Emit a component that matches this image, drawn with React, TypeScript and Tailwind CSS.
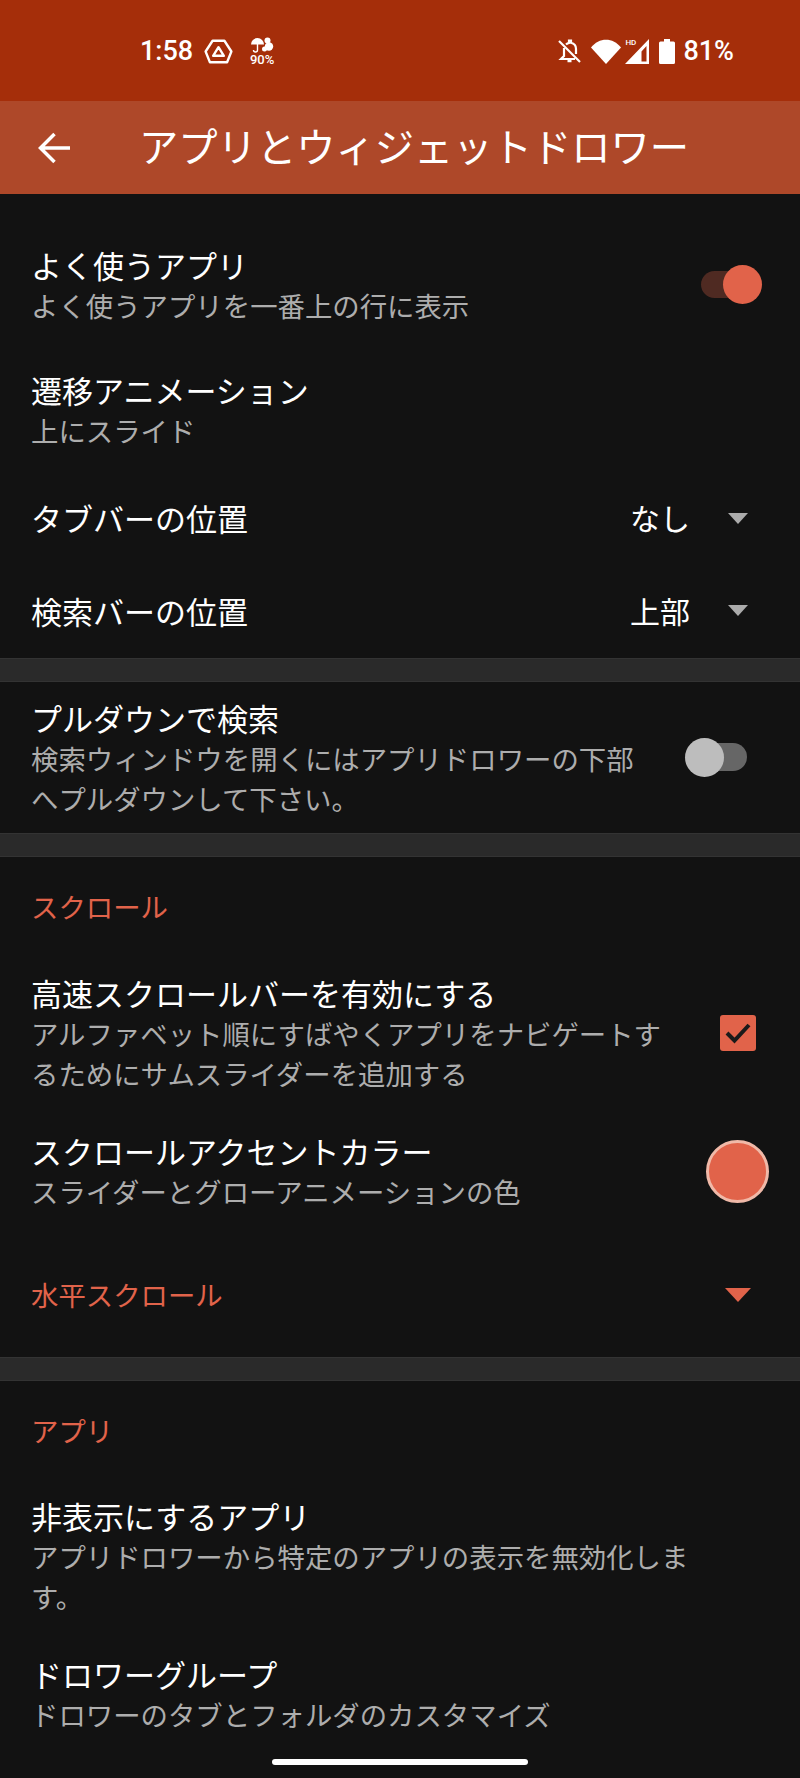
const jp = "font-['Noto_Sans_CJK_JP',sans-serif]";

function Caret({ accent }: { accent?: boolean }) {
  return accent ? (
    <svg width="26" height="14" viewBox="0 0 26 14" className="mt-[2px] shrink-0">
      <path d="M0 0h26L13 14z" fill="#e1634a" />
    </svg>
  ) : (
    <svg width="20" height="11" viewBox="0 0 20 11" className="shrink-0">
      <path d="M0 0h20L10 11z" fill="#ababab" />
    </svg>
  );
}

function Item({
  title,
  sub,
  className,
  right,
}: {
  title: string;
  sub?: React.ReactNode;
  className: string;
  right?: React.ReactNode;
}) {
  return (
    <div className={`flex items-center pl-[31px] ${className}`}>
      <div className="flex-1">
        <div className="text-[31px] leading-[40px] text-white">{title}</div>
        {sub && <div className="text-[27.4px] leading-[40px] text-[#adadad]">{sub}</div>}
      </div>
      {right}
    </div>
  );
}

function Select({ value }: { value: string }) {
  return (
    <div className="flex items-center pr-[52px]">
      <span className="mb-[2px] text-[30px] leading-[40px] text-white">{value}</span>
      <span className="ml-[38px]">
        <Caret />
      </span>
    </div>
  );
}

function Divider() {
  return <div className="h-6 border-y border-[#333333] bg-[#2a2a2a]" />;
}

function SectionLabel({ text, className }: { text: string; className: string }) {
  return <div className={`pl-[31px] text-[27.4px] leading-[40px] text-[#e1634a] ${className}`}>{text}</div>;
}

function StatusBar() {
  return (
    <div className="flex h-[101px] items-center bg-[#a52e0a] pl-[140px] pt-[2px] text-white">
      <span className="font-['Roboto',sans-serif] text-[27px] font-medium leading-none">1:58</span>
      <svg width="29" height="25" viewBox="0 0 27 23" className="ml-[11px]" fill="none" stroke="#fff">
        <path d="M8 1.500h11l6.500 10-4 10H5.500l-4-10z" strokeWidth="2.200" strokeLinejoin="round" />
        <path d="M13.500 7.500l5 8h-10z" strokeWidth="2.200" strokeLinejoin="round" />
      </svg>
      <div className="ml-[16px] flex w-[26px] flex-col items-center">
        <svg width="24" height="16" viewBox="0 0 24 16" fill="#fff">
          <path d="M1 7.500a6.500 6.500 0 0 1 13 0z" />
          <path d="M7.500 7v6a2 2 0 0 1-4 0" fill="none" stroke="#fff" strokeWidth="1.400" />
          <circle cx="17.500" cy="3.500" r="3" />
          <circle cx="19" cy="9.500" r="4.200" />
          <circle cx="14.500" cy="12" r="2.500" />
        </svg>
        <span className="font-['Roboto',sans-serif] text-[13px] font-medium leading-[13px]">90%</span>
      </div>
      <div className="ml-auto flex items-center pr-[66px]">
        <svg width="25" height="25" viewBox="0 0 25 25" fill="none" stroke="#fff">
          <path d="M2 2l21 21" strokeWidth="2.200" />
          <path d="M7 9v8l-3 3h14M9 5.500c1-1 2-1.500 3-1.700V1.500h2v2.300c3 .7 5 3 5 6V15" strokeWidth="2.200" />
          <path d="M10.500 22h4" strokeWidth="2.500" />
        </svg>
        <svg width="30" height="25" viewBox="0 0 30 25" className="ml-[9px]" fill="#fff">
          <path d="M0 8.500C8-2 22-2 30 8.500L15 25z" />
        </svg>
        <div className="relative ml-[4px] h-[25px] w-[25px]">
          <svg width="25" height="25" viewBox="0 0 25 25" fill="#fff">
            <path d="M24 0v25H0zM21.500 7l-5 5.500V22.500h5z" fillRule="evenodd" />
          </svg>
          <span className="absolute left-0 top-0 font-['Roboto',sans-serif] text-[8px] font-medium leading-[8px]">HD</span>
        </div>
        <svg width="16" height="25" viewBox="0 0 16 25" className="ml-[9px]" fill="#fff">
          <path d="M5 0h6v2.500h3.500a1.500 1.500 0 0 1 1.500 1.500v19.500a1.500 1.500 0 0 1-1.500 1.500h-13a1.500 1.500 0 0 1-1.500-1.500V4a1.500 1.500 0 0 1 1.500-1.500H5z" />
        </svg>
        <span className="ml-[8px] font-['Roboto',sans-serif] text-[27px] font-medium leading-none">81%</span>
      </div>
    </div>
  );
}

export default function App() {
  return (
    <div className={`relative h-[1778px] w-[800px] overflow-hidden bg-[#121212] ${jp}`}>
      <StatusBar />
      <div className="flex h-[93px] items-center bg-[#ae4829] pb-[5px]">
        <svg width="32" height="32" viewBox="0 0 32 32" className="ml-[38px] mt-[5px]" fill="none" stroke="#fff" strokeWidth="3.500">
          <path d="M32 16H3M16.500 2L2.500 16l14 14" />
        </svg>
        <span className="ml-[69px] text-[39.3px] leading-[50px] text-white">アプリとウィジェットドロワー</span>
      </div>

      <Item
        title="よく使うアプリ"
        sub="よく使うアプリを一番上の行に表示"
        className="pt-[51px] pb-[23px]"
        right={
          <div className="relative mb-[2px] mr-[38px] h-[39px] w-[61px]">
            <div className="absolute left-0 top-[6px] h-[27px] w-[50px] rounded-full bg-[#4f2a22]" />
            <div className="absolute right-0 top-0 h-[39px] w-[39px] rounded-full bg-[#e1634a]" />
          </div>
        }
      />
      <Item title="遷移アニメーション" sub="上にスライド" className="pt-[22px] pb-[22px]" />
      <Item title="タブバーの位置" className="h-[92px]" right={<Select value="なし" />} />
      <Item title="検索バーの位置" className="h-[94px] pb-[1px]" right={<Select value="上部" />} />
      <Divider />

      <Item
        title="プルダウンで検索"
        sub={
          <>
            検索ウィンドウを開くにはアプリドロワーの下部
            <br />
            へプルダウンして下さい。
          </>
        }
        className="h-[151px]"
        right={
          <div className="relative mr-[53px] h-[39px] w-[62px]">
            <div className="absolute right-0 top-[5px] h-[28px] w-[52px] rounded-full bg-[#666666]" />
            <div className="absolute left-0 top-0 h-[39px] w-[39px] rounded-full bg-[#bdbdbd]" />
          </div>
        }
      />
      <Divider />

      <SectionLabel text="スクロール" className="pt-[29px]" />
      <Item
        title="高速スクロールバーを有効にする"
        sub={
          <>
            アルファベット順にすばやくアプリをナビゲートす
            <br />
            るためにサムスライダーを追加する
          </>
        }
        className="pt-[47px]"
        right={
          <div className="mr-[44px] flex h-9 w-9 items-center justify-center rounded-[3px] bg-[#e1634a]">
            <svg width="28" height="22" viewBox="0 0 28 22" fill="none" stroke="#1a1a1a" strokeWidth="4">
              <path d="M3 11l7.500 7.500L25 3" />
            </svg>
          </div>
        }
      />
      <Item
        title="スクロールアクセントカラー"
        sub="スライダーとグローアニメーションの色"
        className="pt-[38px]"
        right={<div className="mr-[31px] h-[63px] w-[63px] rounded-full border-[3px] border-[#f0b9a8] bg-[#e1634a]" />}
      />
      <div className="flex items-center pl-[31px] pr-[49px] pt-[63px]">
        <span className="flex-1 text-[27.4px] leading-[40px] text-[#e1634a]">水平スクロール</span>
        <Caret accent />
      </div>
      <div className="h-[43px]" />
      <Divider />

      <SectionLabel text="アプリ" className="pt-[29px]" />
      <Item
        title="非表示にするアプリ"
        sub={
          <>
            アプリドロワーから特定のアプリの表示を無効化しま
            <br />
            す。
          </>
        }
        className="pt-[46px]"
      />
      <Item title="ドロワーグループ" sub="ドロワーのタブとフォルダのカスタマイズ" className="pt-[38px]" />

      <div className="absolute bottom-[13px] left-[272px] h-[6px] w-[256px] rounded-full bg-white" />
    </div>
  );
}
